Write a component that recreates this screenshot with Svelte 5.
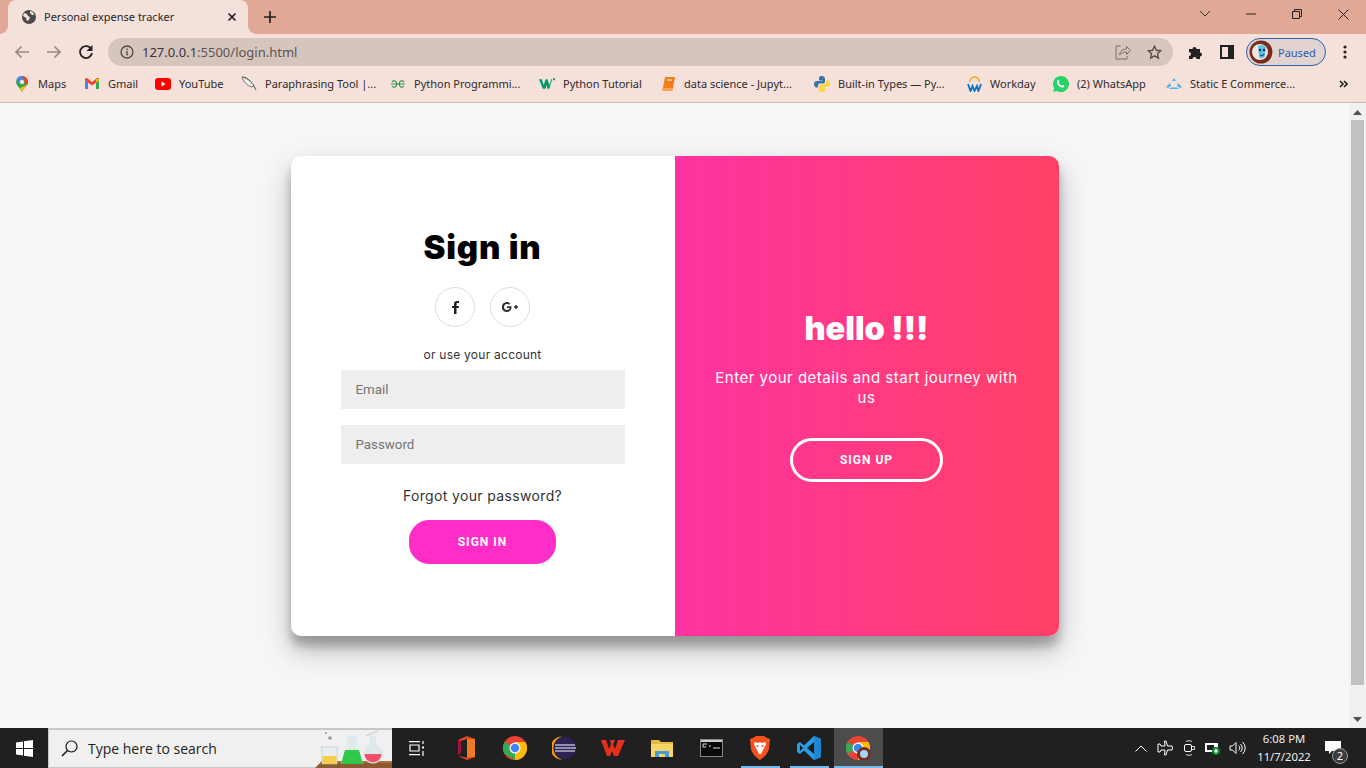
<script>
  const marks = [
    { label: 'Maps', w: 70 }, { label: 'Gmail', w: 71 }, { label: 'YouTube', w: 86 },
    { label: 'Paraphrasing Tool |...', w: 149 }, { label: 'Python Programmi...', w: 149 },
    { label: 'Python Tutorial', w: 121 }, { label: 'data science - Jupyt...', w: 154 },
    { label: 'Built-in Types — Py...', w: 152 }, { label: 'Workday', w: 87 },
    { label: '(2) WhatsApp', w: 113 }, { label: 'Static E Commerce...', w: 150 }
  ];
</script>

<div class="screen">
  <header class="chrome">
    <div class="tabstrip">
      <div class="tab">
        <svg width="16" height="16" viewBox="0 0 16 16"><circle cx="8" cy="8" r="7" fill="#4b4a4a"/><path d="M3 4l3 1 1 2 2 1-1 3-2 1-1-3-3-2zM9 2l3 1 1 3-2 0-2-2z" fill="#f5e1db"/></svg>
        <span class="tab-title">Personal expense tracker</span>
        <svg class="tab-x" width="10" height="10" viewBox="0 0 10 10"><path d="M1.500 1.500l7 7M8.500 1.500l-7 7" stroke="#222" stroke-width="1.700"/></svg>
      </div>
      <svg class="plus" width="12" height="12" viewBox="0 0 12 12"><path d="M6 0v12M0 6h12" stroke="#222" stroke-width="1.700"/></svg>
      <div class="winctl">
        <span class="ctl"><svg width="12" height="8" viewBox="0 0 12 8"><path d="M1 1l5 5 5-5" fill="none" stroke="#333"/></svg></span>
        <span class="ctl"><svg width="10" height="2" viewBox="0 0 10 2"><path d="M0 1h10" stroke="#222"/></svg></span>
        <span class="ctl"><svg width="10" height="10" viewBox="0 0 10 10"><path d="M.5 2.500h7v7h-7zM2.500 2.500v-2h7v7h-2" fill="none" stroke="#222"/></svg></span>
        <span class="ctl"><svg width="11" height="11" viewBox="0 0 11 11"><path d="M.5.500l10 10M10.500.500l-10 10" stroke="#222"/></svg></span>
      </div>
    </div>

    <div class="toolbar">
      <svg class="nav" width="16" height="14" viewBox="0 0 16 14"><path d="M15 7H2M7.500 1.500L2 7l5.500 5.500" fill="none" stroke="#958a87" stroke-width="1.700"/></svg>
      <svg class="nav" width="16" height="14" viewBox="0 0 16 14"><path d="M1 7h13M8.500 1.500L14 7l-5.500 5.500" fill="none" stroke="#958a87" stroke-width="1.700"/></svg>
      <svg class="nav" width="16" height="16" viewBox="0 0 16 16"><path d="M13.500 5.500A6 6 0 1 0 14 9" fill="none" stroke="#222" stroke-width="1.800"/><path d="M14.500 1v6h-6z" fill="#222"/></svg>
      <div class="omnibox">
        <svg width="14" height="14" viewBox="0 0 14 14"><circle cx="7" cy="7" r="6" fill="none" stroke="#4c4a49" stroke-width="1.300"/><path d="M7 6v4.500M7 3.500v1.500" stroke="#4c4a49" stroke-width="1.400"/></svg>
        <div class="url"><span class="host">127.0.0.1</span>:5500/login.html</div>
        <svg class="share" width="16" height="15" viewBox="0 0 16 15"><path d="M5.500 1H1v13h11v-3" fill="none" stroke="#7a706c" stroke-width="1"/><path d="M4.500 10c.5-4 3.500-6 7-6V1.500L15.500 5.500l-4 4V7c-3 0-5 1-7 3z" fill="none" stroke="#7a706c" stroke-width="1"/></svg>
        <svg class="star" width="15" height="15" viewBox="0 0 15 15"><path d="M7.500 1.300l1.900 4 4.300.5-3.200 3 .9 4.300-3.900-2.200-3.900 2.200.9-4.300-3.200-3 4.300-.5z" fill="none" stroke="#554c49" stroke-width="1.400"/></svg>
      </div>
      <svg class="ext" width="16" height="16" viewBox="0 0 16 16"><path d="M1 5h3.500a2 2 0 1 1 4 0H12v3.500a2 2 0 1 1 0 4V15H8.500a2 2 0 1 0-4 0H1v-3a2 2 0 1 0 0-4z" fill="#222"/></svg>
      <svg class="panel" width="14" height="14" viewBox="0 0 14 14"><rect width="14" height="14" fill="#222"/><rect x="2" y="2" width="6" height="10" fill="#f5e0da"/></svg>
      <div class="profile">
        <svg width="24" height="24" viewBox="0 0 24 24"><circle cx="12" cy="12" r="11.500" fill="#7a2a1e"/><circle cx="11" cy="12" r="8" fill="#f3e8e0"/><path d="M9 6c3-2 7-1 8 1l-1 9c-2 3-4 3-6 1z" fill="#5cc2e8"/><circle cx="11" cy="10" r="1.200" fill="#124"/><circle cx="15" cy="10" r="1.200" fill="#124"/><path d="M11 15c2 1 3 1 4-1" stroke="#124" fill="none"/></svg>
        <span>Paused</span>
      </div>
      <svg class="dots" width="4" height="14" viewBox="0 0 4 14"><circle cx="2" cy="2" r="1.600" fill="#222"/><circle cx="2" cy="7" r="1.600" fill="#222"/><circle cx="2" cy="12" r="1.600" fill="#222"/></svg>
    </div>

    <div class="bookmarks">
      {#each marks as m, i}
        <div class="mark" style="width:{m.w}px">
          <span class="fav">
            {#if i === 0}
              <svg width="12" height="16" viewBox="0 0 12 16"><path d="M6 16C4 12 0 9 0 6a6 6 0 0 1 12 0c0 3-4 6-6 10z" fill="#34a853"/><path d="M1 2.500A6 6 0 0 1 6 0l2 3-6 4z" fill="#4285f4"/><path d="M6 0a6 6 0 0 1 6 6c0 1-.5 2-1 3L8 5z" fill="#ea4335"/><path d="M11 9c-1 2-4 4-5 7l-2-4z" fill="#fbbc04"/><circle cx="6" cy="6" r="2.200" fill="#f8e3dc"/></svg>
            {:else if i === 1}
              <svg width="14" height="11" viewBox="0 0 14 11"><path d="M0 2v9h3V4z" fill="#4285f4"/><path d="M14 2v9h-3V4z" fill="#34a853"/><path d="M0 1.500C0 0 1.500-.3 2.500.500L7 4l4.500-3.500C12.500-.3 14 0 14 1.500L14 2l-3 2.500L7 7.500 3 4.500 0 2z" fill="#ea4335"/><path d="M11 .9l3 .1v1.500L11 4.500z" fill="#fbbc04"/></svg>
            {:else if i === 2}
              <svg width="16" height="12" viewBox="0 0 16 12"><rect width="16" height="12" rx="3" fill="#f00"/><path d="M6.500 3.500v5l4-2.500z" fill="#fff"/></svg>
            {:else if i === 3}
              <svg width="16" height="16" viewBox="0 0 16 16"><path d="M1 1c5 0 10 4 14 13" fill="none" stroke="#555"/><path d="M1 1c1 4 5 9 10 10l2-1C11 6 6 2 1 1z" fill="#eee" stroke="#555" stroke-width=".8"/></svg>
            {:else if i === 4}
              <svg width="14" height="8" viewBox="0 0 14 8"><path d="M0 4h14M1 2a2.500 2.500 0 0 1 4.500 2 2.500 2.500 0 0 1-4.500 2M13 2a2.500 2.500 0 0 0-4.500 2A2.500 2.500 0 0 0 13 6" fill="none" stroke="#2f8d46" stroke-width="1.100"/></svg>
            {:else if i === 5}
              <svg width="17" height="12" viewBox="0 0 17 12"><path d="M0 1h3l2 6 2-6h2l2 6 2-6h1l-3 10H9L8 7l-1 4H4z" fill="#049a6e"/><path d="M15 0h2v2h-2z" fill="#049a6e"/></svg>
            {:else if i === 6}
              <svg width="13" height="14" viewBox="0 0 13 14"><path d="M3 0h10l-2 11H1z" fill="#ee7d1b"/><path d="M1 11h10l-.5 3H2a1.500 1.500 0 0 1-1-3z" fill="#f7a254"/><path d="M5 3h5" stroke="#fff"/></svg>
            {:else if i === 7}
              <svg width="16" height="16" viewBox="0 0 16 16"><path d="M8 0C5 0 5 1.500 5 3v1.500h3.500V5H3C1 5 0 6.500 0 8.200s1 3.300 2.500 3.300H4V9.500C4 8 5 7.500 6 7.500h3.500c1 0 1.500-1 1.500-2V3C11 1 9.500 0 8 0z" fill="#3776ab"/><path d="M8 16c3 0 3-1.500 3-3v-1.500H7.500V11H13c2 0 3-1.500 3-3.200s-1-3.300-2.500-3.300H12v2c0 1.500-1 2-2 2H6.500c-1 0-1.500 1-1.500 2V13c0 2 1.500 3 3 3z" fill="#ffd43b"/></svg>
            {:else if i === 8}
              <svg width="15" height="16" viewBox="0 0 15 16"><path d="M2.500 6a5 5 0 0 1 10 0" fill="none" stroke="#f5a623" stroke-width="1.400"/><path d="M1 8l2.500 7 2-5 2 5L10 10l1.500 5L14 8" fill="none" stroke="#0875c9" stroke-width="1.800"/></svg>
            {:else if i === 9}
              <svg width="16" height="16" viewBox="0 0 16 16"><path d="M8 0a8 8 0 0 0-6.800 12.200L0 16l3.900-1.100A8 8 0 1 0 8 0z" fill="#25d366"/><path d="M5.200 4c.8 0 1.200 1.600 1.200 2l-.7 1c.6 1.300 1.500 2 2.700 2.700l1-.9c.5.100 2 .8 2 1.200-.2 1.500-1.500 1.800-2.500 1.600C6 11 4 8.500 4 6c0-1 .5-1.800 1.200-2z" fill="#fff"/></svg>
            {:else}
              <svg width="16" height="12" viewBox="0 0 16 12"><path d="M8 0l2 3H6zM0 9l4-4 1 3-3 2zM16 9l-4-4-1 3 3 2zM3 11h10l-2-1.500H5z" fill="#4fb4e8"/></svg>
            {/if}
          </span>
          <span class="mark-label">{m.label}</span>
        </div>
      {/each}
      <svg class="more" width="9" height="8" viewBox="0 0 9 8"><path d="M1 1l3 3-3 3M5 1l3 3-3 3" fill="none" stroke="#222" stroke-width="1.600"/></svg>
    </div>
  </header>

  <div class="viewport">
    <main class="page">
      <section class="card">
        <form class="signin">
          <h1>Sign in</h1>
          <div class="social">
            <span class="circle"><svg width="7" height="13" viewBox="0 0 7 13"><path d="M2 13V7H0V5h2V3c0-2 1-3 3-3h2v2H5.500C4.500 2 4.500 2.500 4.500 3v2H7l-.4 2H4.500v6z" fill="#222"/></svg></span>
            <span class="circle"><svg width="17" height="10" viewBox="0 0 17 10"><path d="M9.500 4.300H5v1.700h2.700C7.300 7.300 6.300 8 5 8a3 3 0 1 1 1.900-5.300l1.300-1.300A5 5 0 1 0 5 10c3 0 4.800-2.200 4.500-5.700z" fill="#333"/><path d="M14 3v4M12 5h4" stroke="#333" stroke-width="1.500"/></svg></span>
          </div>
          <span class="hint">or use your account</span>
          <input type="email" placeholder="Email" />
          <input type="password" placeholder="Password" />
          <a class="forgot" href="#top">Forgot your password?</a>
          <button type="button" class="primary">Sign In</button>
        </form>
        <div class="overlay">
          <h1>hello !!!</h1>
          <p>Enter your details and start journey with us</p>
          <button type="button" class="ghost">Sign Up</button>
        </div>
      </section>
    </main>
    <div class="scrollbar">
      <svg width="9" height="5" viewBox="0 0 9 5"><path d="M4.500 0L9 5H0z" fill="#505050"/></svg>
      <div class="thumb"></div>
      <svg width="9" height="5" viewBox="0 0 9 5"><path d="M4.500 5L9 0H0z" fill="#505050"/></svg>
    </div>
  </div>

  <footer class="taskbar">
    <div class="start"><svg width="17" height="17" viewBox="0 0 17 17"><path d="M0 2.500l7-1v6.500H0zM8 1.300L17 0v8H8zM0 9h7v6.500l-7-1zM8 9h9v8l-9-1.300z" fill="#fff"/></svg></div>
    <div class="search">
      <svg width="17" height="17" viewBox="0 0 17 17"><circle cx="10.500" cy="6.500" r="5.500" fill="none" stroke="#111" stroke-width="1.200"/><path d="M6.500 10.500L1 16" stroke="#111" stroke-width="1.400"/></svg>
      <span>Type here to search</span>
      <svg class="flasks" width="78" height="38" viewBox="0 0 78 38">
        <path d="M1 38l7-7h70v7z" fill="#8b5a32"/><path d="M8 31h70v2H6z" fill="#a8703c"/>
        <path d="M7 17h17v2l-1 1v14H8V20l-1-1z" fill="#e6eef2" stroke="#b9c3c8" stroke-width=".6"/><path d="M8.500 26h14v8h-14z" fill="#f6cf4a"/>
        <path d="M33 5h10v10l6 19H27l6-19z" fill="#dfe8ea"/><path d="M31 20h14l4 14H27z" fill="#31c94a"/>
        <path d="M56 6h6v9a9.500 9.500 0 1 1-6 0z" fill="#dfe8ea"/><path d="M50.500 24h17a8.500 8.500 0 1 1-17 0z" fill="#f4506c"/>
        <path d="M52 6l12-5" stroke="#cfd8da" stroke-width="1.500"/>
        <circle cx="16" cy="8" r="1.800" fill="#8a9aa0"/><circle cx="12" cy="3" r="1" fill="#8a9aa0"/>
      </svg>
    </div>
    <div class="apps">
      <span class="app"><svg width="16" height="15" viewBox="0 0 16 15" fill="none" stroke="#fff" stroke-width="1.200"><path d="M0 .6h11M1 4h9v6H1zM0 13.600h11M14 0v3M14 10v5"/><path d="M13 5.500h2v2h-2z" fill="#fff" stroke="none"/></svg></span>
      <span class="app"><svg width="18" height="24" viewBox="0 0 18 24"><path d="M10 0l8 3v18l-8 3-9-4 9 1.500V3L4 5v11l-3 3V4z" fill="#e8471c"/><path d="M10 3l8 0v18l-8 0z" fill="#ef7a28"/><path d="M1 4l3 1v11l-3 3z" fill="#a3123f"/></svg></span>
      <span class="app"><svg width="24" height="24" viewBox="0 0 24 24"><circle cx="12" cy="12" r="12" fill="#ea4335"/><path d="M12 12L1.600 18A12 12 0 0 1 1.600 6z" fill="#34a853"/><path d="M12 24a12 12 0 0 0 10.400-18H12z" fill="#fbbc04"/><path d="M12 24L1.600 18 7 9l5 3z" fill="#34a853"/><circle cx="12" cy="12" r="5.500" fill="#fff"/><circle cx="12" cy="12" r="4.300" fill="#4285f4"/></svg></span>
      <span class="app"><svg width="24" height="24" viewBox="0 0 24 24"><circle cx="13" cy="12" r="11" fill="#2c2255"/><path d="M10 .500a11.500 11.500 0 0 0 0 23A12 12 0 0 1 10 .500z" fill="#f7941e"/><path d="M3 9h20M3 12h21M3 15h20" stroke="#fff" stroke-width="1.200"/></svg></span>
      <span class="app"><svg width="24" height="16" viewBox="0 0 24 16"><path d="M0 0h5l3 9 2-5-1-4h5l-2 5 2 4 3-9h7l-7 16h-4l-2-5-2 5H6z" fill="#e5301d"/></svg></span>
      <span class="app"><svg width="22" height="18" viewBox="0 0 22 18"><path d="M0 1h8l2 2h12v15H0z" fill="#e8b93c"/><path d="M0 5h22v13H0z" fill="#f6d569"/><path d="M4 18v-6h14v6h-4v-3H8v3z" fill="#4a9ad8"/></svg></span>
      <span class="app"><svg width="23" height="18" viewBox="0 0 23 18"><rect x=".500" y=".500" width="22" height="17" fill="#0a0a0a" stroke="#888"/><path d="M1 1h21v2H1z" fill="#ccc"/><path d="M3 5h4M3 5v3h3M9 7h2M13 9h7" stroke="#ddd" fill="none"/></svg></span>
      <span class="app lined"><svg width="20" height="24" viewBox="0 0 20 24"><path d="M3 2l3-2h8l3 2 3 1-1 10c-1 5-6 9-9 11-3-2-8-6-9-11L0 3z" fill="#f5521f"/><path d="M5 6l3 1 2-1 2 1 3-1 1 2-3 6-2 4h-2l-2-4-3-6z" fill="#fff"/><circle cx="7.500" cy="10" r="1" fill="#f5521f"/><circle cx="12.500" cy="10" r="1" fill="#f5521f"/></svg></span>
      <span class="app lined"><svg width="24" height="24" viewBox="0 0 24 24"><path d="M17 0l7 3v18l-7 3L7 14.500 3 18l-3-2v-8l3-2 4 3.500z" fill="#2a9ce8"/><path d="M17 6v12l-7-6z" fill="#1b1b1b"/><path d="M3 9l3 3-3 3z" fill="#1b1b1b"/><path d="M17 0l7 3v18l-7 3z" fill="#1f86d2"/></svg></span>
      <span class="app active"><svg width="24" height="24" viewBox="0 0 24 24"><circle cx="12" cy="12" r="12" fill="#ea4335"/><path d="M12 12L1.600 18A12 12 0 0 1 1.600 6z" fill="#34a853"/><path d="M12 24a12 12 0 0 0 10.400-18H12z" fill="#fbbc04"/><circle cx="12" cy="12" r="5.500" fill="#fff"/><circle cx="12" cy="12" r="4.300" fill="#4285f4"/><circle cx="18" cy="18" r="7" fill="#7a2a1e"/><circle cx="18" cy="18" r="4" fill="#9fd8f0"/></svg></span>
    </div>
    <div class="tray">
      <span class="ti"><svg width="12" height="7" viewBox="0 0 12 7"><path d="M.5 6.500L6 1l5.500 5.500" fill="none" stroke="#fff"/></svg></span>
      <span class="ti"><svg width="16" height="16" viewBox="0 0 16 16"><path d="M9 1l1.500 5H15l.5 2-.5 2h-4.500L9 15H7.500L8 10H4l-1 2H1V4h2l1 2h4L7.500 1z" fill="none" stroke="#fff"/></svg></span>
      <span class="ti"><svg width="12" height="16" viewBox="0 0 12 16"><rect x="1.500" y="4.500" width="7" height="7" rx="1.500" fill="none" stroke="#fff"/><path d="M3 1.500c2-1 4-1 6 0M3 14.500c2 1 4 1 6 0M9 6.500h2.500v3H9" fill="none" stroke="#ddd"/></svg></span>
      <span class="ti"><svg width="16" height="14" viewBox="0 0 16 14"><path d="M0 2h13v9H0z" fill="#fff"/><path d="M2 4h7v5H2z" fill="#202020"/><circle cx="11" cy="10" r="4" fill="#0a8a2e"/><path d="M11 7.500l2 2.500-2 2.500-2-2.500z" fill="#fff"/></svg></span>
      <span class="ti"><svg width="17" height="14" viewBox="0 0 17 14"><path d="M1 5h2.500L7 1.500v11L3.500 9H1zM9.500 4.500a3 3 0 0 1 0 5M11.500 3a5.500 5.500 0 0 1 0 8M13.500 1a8 8 0 0 1 0 12" fill="none" stroke="#fff"/></svg></span>
    </div>
    <div class="clock"><span>6:08 PM</span><span>11/7/2022</span></div>
    <div class="notify">
      <svg width="16" height="13" viewBox="0 0 16 13"><path d="M0 0h16v10H7l-3 3v-3H0z" fill="#fff"/></svg>
      <span class="badge">2</span>
    </div>
  </footer>
</div>

<style>
  :global(body) { margin: 0; overflow: hidden; }
  * { box-sizing: border-box; }
  .screen {
    width: 1366px; height: 768px; display: flex; flex-direction: column;
    font-family: "Noto Sans", "Open Sans", sans-serif; background: #f6f5f7;
  }
  .chrome { flex: none; height: 103px; display: flex; flex-direction: column; background: #f5e0da; }
  .tabstrip { height: 34px; background: #e1a995; padding-left: 8px; display: flex; align-items: center; }
  .tab {
    position: relative; width: 240px; height: 34px; background: #f5e1db; border-radius: 8px 8px 0 0;
    display: flex; align-items: center; padding: 0 11px 0 13px; color: #262626; align-self: flex-end;
  }
  .tab::before, .tab::after {
    content: ""; position: absolute; bottom: 0; width: 8px; height: 8px;
  }
  .tab::before { left: -8px; background: radial-gradient(circle at 0 0, #e1a995 7.500px, #f5e1db 8px); }
  .tab::after { right: -8px; background: radial-gradient(circle at 100% 0, #e1a995 7.500px, #f5e1db 8px); }
  .tab-title { margin-left: 7px; flex: 1; white-space: nowrap; font-size: 11px; padding-bottom: 2px; }
  .plus { margin-left: 16px; }
  .winctl { margin-left: auto; display: flex; align-self: flex-start; height: 28px; }
  .ctl { width: 46px; height: 28px; display: flex; align-items: center; justify-content: center; }
  .toolbar { height: 34px; display: flex; align-items: center; padding: 2px 0 0 14px; }
  .nav { margin-right: 16px; }
  .nav:nth-child(3) { margin-right: 14px; }
  .omnibox {
    width: 1065px; height: 28px; background: #d5c5bd; border-radius: 14px;
    display: flex; align-items: center; padding: 0 11px 0 12px;
  }
  .url { margin-left: 8px; font-size: 13px; color: #5d5453; flex: 1; }
  .host { color: #3a3240; }
  .share { margin-right: 16px; }
  .star { margin-right: 0; }
  .ext { margin-left: 15px; }
  .panel { margin-left: 16px; }
  .profile {
    margin-left: 12px; width: 80px; height: 28px; border: 1px solid #2a62b0; border-radius: 14px;
    background: #e2d3d0; display: flex; align-items: center; padding-left: 2px;
    font-size: 11px; color: #2a5ca8; gap: 5px;
  }
  .dots { margin-left: 17px; }
  .bookmarks {
    height: 35px; border-bottom: 1px solid #c9bcb7; display: flex; align-items: center; padding: 0 0 3px 14px;
  }
  .mark { display: flex; align-items: center; flex: none; font-size: 11px; color: #2e2a2c; }
  .fav { width: 16px; margin-right: 8px; display: flex; align-items: center; justify-content: center; flex: none; }
  .mark-label { white-space: nowrap; }
  .more { margin-left: auto; margin-right: 18px; }
  .viewport { flex: 1; min-height: 0; display: flex; }
  .page { flex: 1; display: flex; justify-content: center; padding-top: 53px; }
  .card {
    width: 768px; height: 480px; display: flex; border-radius: 10px; background: #fff; overflow: hidden;
    box-shadow: 0 14px 28px rgba(0,0,0,.25), 0 10px 10px rgba(0,0,0,.22);
    font-family: "Inter", sans-serif;
  }
  .signin {
    width: 384px; display: flex; flex-direction: column; align-items: center; padding: 72px 50px 0;
  }
  h1 { margin: 0; font-weight: 900; font-size: 33px; line-height: 39px; color: #000; letter-spacing: .8px; }
  .social { display: flex; gap: 15px; margin: 20px 0; }
  .circle {
    width: 40px; height: 40px; border: 1px solid #ddd; border-radius: 50%;
    display: flex; align-items: center; justify-content: center;
  }
  .hint { font-size: 12px; line-height: 15px; color: #333; letter-spacing: .25px; }
  input {
    display: block; width: 284px; height: 39px; border: 0; background: #eee; padding: 0 15px 1px;
    margin: 8px 0; font: 13.330px Roboto, sans-serif; outline: 0;
  }
  input::placeholder { color: #757575; }
  .forgot {
    margin: 15px 0 15px; font-size: 14px; line-height: 18px; color: #333; text-decoration: none; letter-spacing: .35px;
  }
  button {
    height: 44px; border-radius: 20px; font: 700 12px Roboto, sans-serif; letter-spacing: 1px;
    text-transform: uppercase; color: #fff; padding: 0;
  }
  .primary { width: 147px; border: 1px solid #ff2dc8; background: #ff2dc8; }
  .overlay {
    width: 384px; background: linear-gradient(to right, #ff33a1, #ff4065); color: #fff;
    display: flex; flex-direction: column; align-items: center; padding: 153px 40px 0; text-align: center;
  }
  .overlay h1 { color: #fff; letter-spacing: 0; font-size: 32.500px; }
  .overlay p {
    margin: 20px -2px 30px; font-size: 15px; line-height: 20px; font-weight: 400; letter-spacing: .5px;
  }
  .ghost { width: 153px; border: 3px solid #fff; background: transparent; border-radius: 22px; }
  .scrollbar {
    width: 17px; background: #f1f1f1; display: flex; flex-direction: column; align-items: center;
    padding: 7px 0 6px;
  }
  .thumb { width: 13px; height: 565px; margin: 5px 0 auto; background: #c1c1c1; }
  .taskbar { flex: none; height: 40px; background: #202020; display: flex; align-items: center; }
  .start { width: 48px; display: flex; justify-content: center; }
  .search {
    width: 344px; height: 40px; background: #f0f0f0; border: 2px solid #c8c8c8; border-bottom-width: 1px;
    border-left-width: 1px; border-right-width: 0;
    display: flex; align-items: center; padding-left: 12px; font-size: 14px; color: #222;
    font-family: "Open Sans", sans-serif;
  }
  .search span { margin-left: 10px; flex: 1; }
  .flasks { align-self: flex-end; margin-bottom: -1px; }
  .apps { display: flex; align-items: center; height: 40px; }
  .app {
    position: relative; width: 49.100px; height: 40px; display: flex; align-items: center; justify-content: center;
  }
  .lined::after, .active::after {
    content: ""; position: absolute; bottom: 0; left: 5px; right: 5px; height: 2px; background: #76b9ed;
  }
  .active { background: #4c4c4c; }
  .active::after { left: 0; right: 0; }
  .tray { margin-left: auto; display: flex; align-items: center; }
  .ti { width: 24px; display: flex; align-items: center; justify-content: center; }
  .clock {
    width: 62px; margin-left: 4px; display: flex; flex-direction: column; align-items: center;
    font-size: 11.300px; line-height: 18.500px; color: #eee;
  }
  .notify {
    position: relative; width: 46px; height: 40px; margin-right: 5px; display: flex; align-items: center;
    justify-content: center; padding: 0 10px 2px 0;
  }
  .badge {
    position: absolute; left: 17px; top: 20px; width: 16px; height: 16px; border-radius: 50%;
    background: #3c3c3c; border: 1px solid #999; color: #fff; font-size: 11px; line-height: 14px; text-align: center;
  }
</style>
